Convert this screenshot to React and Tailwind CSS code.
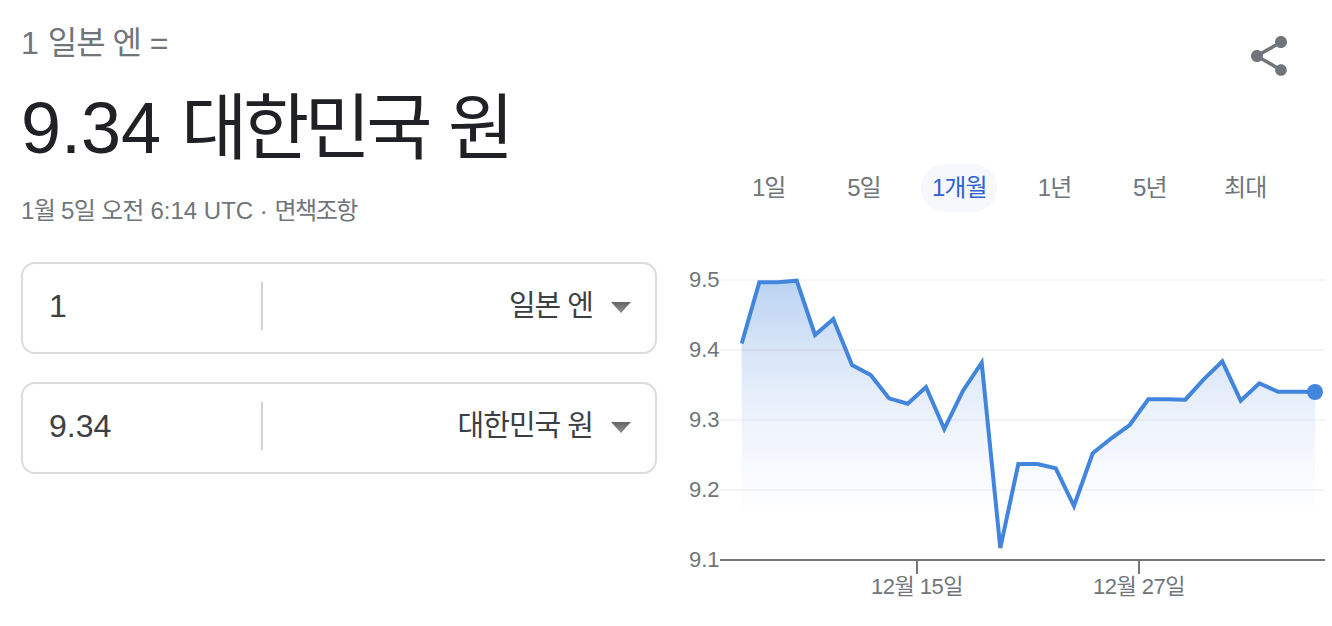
import React from 'react';

const FONT = "font-['Liberation_Sans','Noto_Sans_CJK_KR',sans-serif]";

const POINTS = [
  [741.7, 343.5], [759.3, 282.3], [778, 282.3], [796.7, 280.7], [815, 335], [833.3, 319],
  [852, 365], [870.7, 375], [889, 398.3], [907.7, 403.7], [926, 387], [944.3, 429],
  [963, 390.7], [981.7, 362.7], [1000.3, 548], [1018.3, 464], [1037.3, 464], [1055.7, 468.3],
  [1074, 506], [1092.7, 453.3], [1111.3, 438.3], [1129.7, 425], [1148.3, 399.3], [1167, 399.3],
  [1185.3, 399.7], [1203.7, 379.3], [1222.3, 361.3], [1240.7, 400.7], [1259.3, 383.3],
  [1278, 391.7], [1296.5, 391.7], [1315, 391.7],
];

const RANGES = ['1일', '5일', '1개월', '1년', '5년', '최대'];

function ConverterRow({ value, currency }) {
  return (
    <div className="flex items-center h-[92px] pb-[4px] border-2 border-[#dadce0] rounded-[14px]">
      <div className="w-[238px] pl-[26px] text-[32px] leading-[40px] text-[#3c4043]">{value}</div>
      <div className="w-[2px] h-[48px] bg-[#cfd1d4]"></div>
      <div className="flex-1 flex items-center justify-end pr-[24px] gap-[18px]">
        <span className="text-[29px] leading-[36px] tracking-[-1px] text-[#3c4043]">{currency}</span>
        <svg width="20" height="11" viewBox="0 0 20 11" className="mt-[3px]">
          <defs>
            <linearGradient id="caret" x1="0" y1="0" x2="0" y2="1">
              <stop offset="0" stopColor="#666666" />
              <stop offset="1" stopColor="#8f8f8f" />
            </linearGradient>
          </defs>
          <polygon points="0,0 20,0 10,11" fill="url(#caret)" />
        </svg>
      </div>
    </div>
  );
}

function Chart() {
  const line = POINTS.map(([x, y]) => `${x},${y}`).join(' ');
  const area = `741.7,560 ${line} 1315,560`;
  return (
    <svg width="652" height="340" viewBox="680 260 652 340" className="block">
      <defs>
        <linearGradient id="fade" gradientUnits="userSpaceOnUse" x1="0" y1="280" x2="0" y2="520">
          <stop offset="0" stopColor="#bad3f2" />
          <stop offset="0.29" stopColor="#d8e5f7" />
          <stop offset="0.58" stopColor="#edf3fc" />
          <stop offset="0.87" stopColor="#fbfcfe" />
          <stop offset="1" stopColor="#ffffff" />
        </linearGradient>
      </defs>
      <polygon points={area} fill="url(#fade)" />
      {[280, 350, 420, 490].map((y) => (
        <line key={y} x1="720" x2="1325" y1={y} y2={y} stroke="#70757a" strokeOpacity="0.07" strokeWidth="2" />
      ))}
      <polyline points={line} fill="none" stroke="#4285dc" strokeWidth="4" strokeLinejoin="miter" />
      <circle cx="1315" cy="392" r="8" fill="#4285dc" />
      <line x1="720" x2="1325" y1="560" y2="560" stroke="#70757a" strokeWidth="2" />
      <line x1="917" x2="917" y1="560" y2="574" stroke="#70757a" strokeWidth="2" />
      <line x1="1139" x2="1139" y1="560" y2="574" stroke="#70757a" strokeWidth="2" />
      <g fill="#70757a" fontSize="22">
        <text x="689" y="287">9.5</text>
        <text x="689" y="357">9.4</text>
        <text x="689" y="427">9.3</text>
        <text x="689" y="497">9.2</text>
        <text x="689" y="567">9.1</text>
        <text x="917" y="594" textAnchor="middle" className="tracking-[-0.5px]">12월 15일</text>
        <text x="1139" y="594" textAnchor="middle" className="tracking-[-0.5px]">12월 27일</text>
      </g>
    </svg>
  );
}

export default function App() {
  return (
    <div className={`${FONT} flex w-[1332px] h-[626px] bg-white overflow-hidden`}>
      <div className="w-[680px] pl-[21px] pr-[23px]">
        <div className="mt-[26px] text-[32px] leading-[34px] text-[#70757a]">
          1 <span className="tracking-[-1px]">일본 엔</span> =
        </div>
        <div className="mt-[26px] text-[72px] leading-[84px] text-[#202124]">
          9.34 <span className="tracking-[-4.5px]">대한민국</span> 원
        </div>
        <div className="mt-[26px] text-[24px] leading-[30px] text-[#70757a]">
          <span className="tracking-[-0.7px]">1월 5일 오전</span> 6:14 UTC · <span className="tracking-[-1.5px]">면책조항</span>
        </div>
        <div className="mt-[36px] flex flex-col gap-[28px]">
          <ConverterRow value="1" currency="일본 엔" />
          <ConverterRow value="9.34" currency="대한민국 원" />
        </div>
      </div>
      <div className="flex-1 flex flex-col">
        <div className="flex justify-end pt-[32px] pr-[39px]">
          <svg width="48" height="48" viewBox="0 0 24 24" fill="#70757a">
            <path d="M18 16.08c-.76 0-1.44.3-1.96.77L8.91 12.7c.05-.23.09-.46.09-.7s-.04-.47-.09-.7l7.05-4.11c.54.5 1.25.81 2.04.81 1.66 0 3-1.34 3-3s-1.34-3-3-3-3 1.34-3 3c0 .24.04.47.09.7L8.04 9.81C7.5 9.31 6.79 9 6 9c-1.66 0-3 1.34-3 3s1.34 3 3 3c.79 0 1.5-.31 2.04-.81l7.12 4.16c-.05.21-.08.43-.08.65 0 1.61 1.31 2.92 2.92 2.92 1.61 0 2.92-1.31 2.92-2.92s-1.31-2.92-2.92-2.92z" />
          </svg>
        </div>
        <div className="mt-[84px] ml-[41px] flex">
          {RANGES.map((r) => (
            <div key={r} className="w-[95.3px] flex justify-center">
              <div className={r === '1개월'
                ? 'w-[76px] h-[48px] rounded-[24px] bg-[#f7f8fb] flex items-center justify-center text-[24px] tracking-[-1px] text-[#2f62d3] whitespace-nowrap'
                : 'h-[48px] flex items-center justify-center text-[24px] tracking-[-1px] text-[#70757a] whitespace-nowrap'}>
                {r}
              </div>
            </div>
          ))}
        </div>
        <div className="mt-[48px]">
          <Chart />
        </div>
      </div>
    </div>
  );
}
